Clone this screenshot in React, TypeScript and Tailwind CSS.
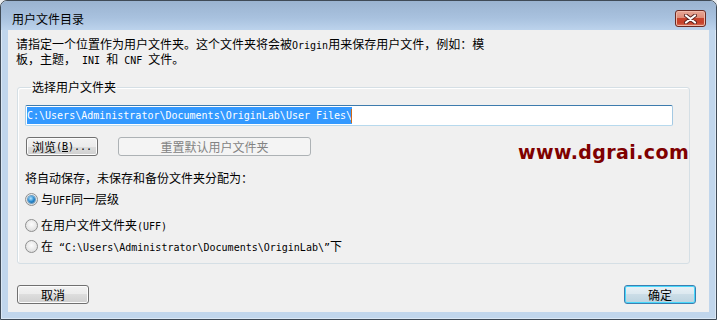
import React from 'react';

const M: React.FC<{ children: React.ReactNode }> = ({ children }) => (
  <span className="font-['DejaVu_Sans_Mono',monospace] text-[10px]">{children}</span>
);

const Radio: React.FC<{ checked?: boolean; children: React.ReactNode; className?: string }> = ({
  checked,
  children,
  className,
}) => (
  <div className={`flex h-[13px] items-center gap-[3px] leading-[13px] ${className ?? ''}`}>
    <span className="flex h-[13px] w-[13px] items-center justify-center rounded-full border border-[#8e8f8f] bg-[radial-gradient(circle_at_50%_40%,#fcfcfc_0%,#e6e6e6_60%,#cfcfcf_100%)]">
      {checked && (
        <span className="h-[7px] w-[7px] rounded-full bg-[radial-gradient(circle_at_40%_35%,#b7e6ff_0%,#2a8bd0_50%,#0d4f86_100%)] shadow-[0_0_0_1px_#6c9fc4]" />
      )}
    </span>
    <span>{children}</span>
  </div>
);

const btnBase =
  'flex h-[19px] items-center justify-center rounded-[3px] border text-[12px] leading-[12px]';
const btnNormal =
  'border-[#707070] bg-[linear-gradient(to_bottom,#f2f2f2_0%,#ebebeb_50%,#dddddd_50%,#cfcfcf_100%)] shadow-[inset_0_0_0_1px_#fcfcfc] text-black';

export default function App() {
  return (
    <div className="h-[320px] w-[717px] bg-[#e9ecef] font-['Noto_Sans_CJK_SC',sans-serif] text-[12px] text-black">
      <div className="flex h-full w-full flex-col rounded-t-[7px] border border-[#3f4a56] bg-[#c1d6ec] shadow-[inset_0_0_0_1px_#dbe8f5]">
        {/* title bar */}
        <div className="flex h-[29px] items-start justify-between rounded-t-[6px] bg-[linear-gradient(to_bottom,#9ab3d0_0%,#a9c2df_60%,#bcd3ec_100%)]">
          <div className="pl-[11px] pt-[12px] leading-[12px] text-black">用户文件目录</div>
          <div className="mr-[10px] mt-[9px] flex h-[17px] w-[31px] items-center justify-center rounded-[3px] border border-[#6b2a22] bg-[linear-gradient(to_bottom,#e8a796_0%,#dd8c78_45%,#c8432c_50%,#c5412b_80%,#dd7b62_100%)] shadow-[inset_0_0_0_1px_#f0b8a8]">
            <svg width="13" height="10" viewBox="0 0 13 10">
              <path d="M2 1.5 L11 8.5 M11 1.5 L2 8.5" stroke="#5b2520" strokeWidth="4" strokeLinecap="round" />
              <path d="M2 1.5 L11 8.5 M11 1.5 L2 8.5" stroke="#ffffff" strokeWidth="2.2" strokeLinecap="round" />
            </svg>
          </div>
        </div>

        {/* client area */}
        <div className="relative mx-[7px] mb-[7px] flex flex-1 flex-col bg-[#f0f0f0]">
          <p className="pl-[8px] pt-[7px] leading-[13px]">
            请指定一个位置作为用户文件夹。这个文件夹将会被<M>Origin</M>用来保存用户文件，例如：模
            <br />
            板，主题，<M> INI </M>和<M> CNF  </M>文件。
          </p>

          <fieldset className="ml-[9px] mr-[19px] mt-[14px] rounded-[3px] border border-[#d5dfe5] pb-[10px] pl-[7px] pr-[16px] shadow-[inset_1px_1px_0_#ffffff]">
            <legend className="ml-[6px] px-[1px] leading-[12px]">选择用户文件夹</legend>

            <div className="mt-[12px] h-[21px] rounded-[2px] border border-b-[#b7d9ed] border-l-[#a4c9e3] border-r-[#a4c9e3] border-t-[#3d7bad] bg-white p-[1px]">
              <div className="flex h-[17px] items-center">
                <span className="inline-block h-[17px] bg-[#3399ff] font-['DejaVu_Sans_Mono',monospace] text-[10px] leading-[17px] text-white">
                  C:\Users\Administrator\Documents\OriginLab\User Files\
                </span>
                <span className="-ml-[1px] inline-block h-[14px] w-[1px] bg-[#cc6a1a]" />
              </div>
            </div>

            <div className="mt-[11px] flex items-center gap-[20px]">
              <button className={`${btnBase} ${btnNormal} ml-[1px] w-[72px]`}>
                浏览<M>(<span className="underline">B</span>)...</M>
              </button>
              <button className={`${btnBase} w-[193px] border-[#adb2b5] bg-[#f4f4f4] text-[#838383]`}>
                重置默认用户文件夹
              </button>
            </div>

            <div className="mt-[16px] leading-[12px]">将自动保存，未保存和备份文件夹分配为：</div>

            <Radio checked className="mt-[9px]">
              与<M>UFF</M>同一层级
            </Radio>
            <Radio className="mt-[13px]">
              在用户文件文件夹<M>(UFF)</M>
            </Radio>
            <Radio className="mt-[8px]">
              在<M> “C:\Users\Administrator\Documents\OriginLab\”</M>下
            </Radio>
          </fieldset>

          <div className="flex-1" />

          <div className="mb-[8px] ml-[9px] mr-[13px] flex items-center justify-between">
            <button className={`${btnBase} ${btnNormal} w-[72px]`}>取消</button>
            <button
              className={`${btnBase} w-[72px] border-[#3c7fb1] bg-[linear-gradient(to_bottom,#e8f1f6_0%,#dbe8ef_50%,#cbdde7_50%,#bcd3df_100%)] shadow-[inset_0_0_0_1px_#48d8fb]`}
            >
              确定
            </button>
          </div>

          {/* watermark */}
          <div className="absolute left-[510px] top-[113px] font-['DejaVu_Sans',sans-serif] text-[19px] font-bold leading-[19px] tracking-[0.4px] text-[#7f0000]">
            www.dgrai.com
          </div>
        </div>
      </div>
    </div>
  );
}
